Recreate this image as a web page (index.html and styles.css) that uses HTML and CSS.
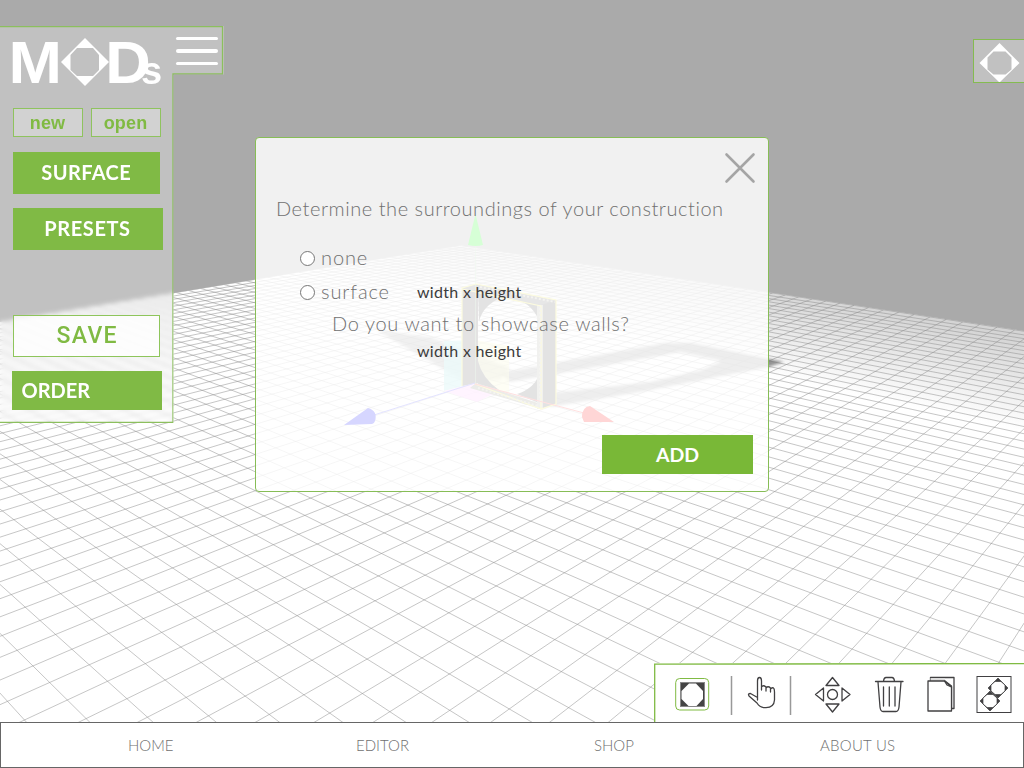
FILE: index.html
```html
<!DOCTYPE html>
<html lang="en">
<head>
<meta charset="utf-8">
<title>MODs editor</title>
<link rel="stylesheet" href="styles.css">
</head>
<body>
<div class="app">
  <main class="stage">
    <svg class="scene" viewBox="0 0 1024 722" width="1024" height="722">
      <defs>
        <linearGradient id="fog" gradientUnits="userSpaceOnUse" x1="900" y1="312" x2="881" y2="400">
          <stop offset="0" stop-color="#d4d4d4"/><stop offset="1" stop-color="#fff"/>
        </linearGradient>
        <filter id="soft"><feGaussianBlur stdDeviation="1.5"/></filter>
        <clipPath id="floor-clip"><path d="M0 322 461 245.500 1024 331V722H0z"/></clipPath>
      </defs>
      <path d="M0 322 461 245.500 1024 331V722H0z" fill="url(#fog)"/>
      <g clip-path="url(#floor-clip)"><path id="grid" class="grid"/></g>
      <g filter="url(#soft)" fill="#666">
        <path fill-rule="evenodd" d="M500 373 665 343 692 343 784 362 768 367 640 392 550 407 552 393 650 382 702 370 722 361 680 352 510 382z" opacity=".7"/>
        <path d="M376 330 430 337 465 350 510 368 500 380 462 380z" opacity=".6"/>
      </g>
      <path d="M444 341 475 340V383L444 391z" fill="#8dd" opacity=".8"/>
      <path d="M476 340 509 346V393L476 383z" fill="#ee9" opacity=".6"/>
      <path d="M444 391 475 383 499 391 477 402z" fill="#faf" opacity=".8"/>
      <path d="M462 288 478 284V383L462 386z" fill="#575555"/>
      <path d="M476 284 556 300 541 306 462 289z" fill="#6b6968"/>
      <path d="M478 290 502 297Q482 306 479 322zM521 301 540 305V326Q537 309 521 301zM478 361Q482 378 499 390L478 384zM517 394Q535 388 539 374V403z" fill="#555"/>
      <path d="M476 383 541 404V409L470 388z" fill="#887"/>
      <path d="M541 305 556 300V404L541 409z" fill="#555252"/>
      <path d="M537 305H543V409H537z" fill="#aaa79e"/>
      <path d="M462 386V288L476 284 556 300V404L541 409 475 384M541 409V306L462 289" fill="none" stroke="#eee840" stroke-width="1.200"/>
      <path d="M480 287 555 302M478 388 538 406M540 308V404" fill="none" stroke="#bba" stroke-width="2" stroke-dasharray="2 2"/>
      <path d="M475.500 245V383" stroke="#9d9" stroke-width=".5"/>
      <path d="M475 383 374 415" stroke="#55f"/>
      <path d="M475 384 584 413" stroke="#f44"/>
      <path d="M475.500 214 483 245Q476 247 468 245z" fill="#0f0"/>
      <path d="M344 425 368 408Q378 411 375 421 374 424 372 424z" fill="#00f"/>
      <path d="M614 422 590 406Q582 407 582 417L584 422z" fill="red"/>
    </svg>

    <aside class="sidebar">
      <svg class="outline" viewBox="0 0 224 398" width="224" height="398"><path d="M0 .500H222.500V48H173V396.500H0"/></svg>
      <header class="brand">
        <svg class="logo" viewBox="0 0 161 50" width="161" height="50">
          <text x="8.500" y="47" class="logo-big" textLength="53.500" lengthAdjust="spacingAndGlyphs">M</text>
          <path fill-rule="evenodd" d="M85 2 109 26 85 50 61 26zM77 12 70.500 19V34L77 40H93L99 34V19L93 12z"/>
          <text x="105.300" y="47" class="logo-big" textLength="45.500" lengthAdjust="spacingAndGlyphs">D</text>
          <text x="141" y="47.500" class="logo-small">s</text>
        </svg>
        <button class="menu" aria-label="Menu"><span></span><span></span><span></span></button>
      </header>
      <div class="pair"><button class="ghost">new</button><button class="ghost ghost-open">open</button></div>
      <button class="solid surface">SURFACE</button>
      <button class="solid presets">PRESETS</button>
      <button class="save">SAVE</button>
      <button class="solid order">ORDER</button>
    </aside>

    <div class="part-tab">
      <svg viewBox="0 0 42 42" width="42" height="42"><path fill-rule="evenodd" fill="#fff" d="M25.500 3 45.500 23 25.500 42.500 5.500 23zM19.500 11.500 13.500 17.500V29.500L19.500 34.500H31.500L37.500 29.500V17.500L31.500 11.500z"/></svg>
    </div>

    <section class="dialog">
      <button class="close" aria-label="Close"><svg viewBox="0 0 32 32" width="32" height="32"><path d="M2.500 2.500 29.500 29.500M29.500 2.500 2.500 29.500"/></svg></button>
      <h1 class="question">Determine the surroundings of your construction</h1>
      <label class="option none"><span class="radio"></span><span class="t-none">none</span></label>
      <div class="option"><span class="radio"></span><span class="t-surface">surface</span><span class="size">width x height</span></div>
      <p class="walls">Do you want to showcase walls?</p>
      <p class="size size-walls">width x height</p>
      <button class="add">ADD</button>
    </section>

    <div class="tools">
      <svg viewBox="-1 0 370 60" width="370" height="60">
        <path d="M-.300 60V1.200L370 .500" fill="none" stroke="#80bb43" stroke-width="1.300"/>
        <rect x="20.700" y="15.500" width="33" height="31.500" rx="4" fill="none" stroke="#80bb43"/>
        <rect x="25.500" y="19.500" width="24" height="24" fill="#444" stroke="#888"/>
        <path d="M34 20.500H41L48 28V36L41.500 43H33.500L26.500 36V28z" fill="#fff"/>
        <path d="M76.500 13V52M135.500 13V52" stroke="#999" stroke-width="1.500"/>
        <g fill="none" stroke="#414042" stroke-width="1.300" stroke-linejoin="round" stroke-linecap="round">
          <path d="M102.500 37V18Q102.500 14.500 104.500 14.500T106.500 18V27M106.500 24Q108 21.500 111 24V28M111 25Q113 22.500 115.500 25V29M115.500 26Q119.500 22.500 119.500 29V37Q119 44.500 111 44.700 105 45 102 40L94 33Q92.500 30.500 95.500 30.500L102.500 34.500"/>
          <circle cx="177.500" cy="31.500" r="5"/>
          <path d="M177.500 14.500 184 22.500H171zM177.500 49 184 41H171zM160.500 31.500 168.500 25V38zM195 31.500 187 25V38z"/>
          <path d="M220.500 18.500H248M223 19 225 44Q225.500 48.500 228 48.500H241Q243.500 48.500 244 44L246 19M228.500 18Q229 14.500 231 14.500H237Q239 14.500 239.500 18"/>
          <path d="M228.500 24V43M234.300 24V43M240 24V43"/>
          <path d="M275.500 18V14.500H299V45.500H296.500V23L290 18z" fill="#fff"/><path d="M275.500 15H290V18H275.500z" fill="#ddd" stroke="none"/>
          <path d="M273 18H289.500L296.500 24V48H273z" fill="#fff"/><path d="M289.500 18 292 22 296.500 24"/>
        </g>
        <rect x="322" y="13.500" width="34" height="36" fill="#fff" stroke="#414042"/>
        <g stroke="#414042" stroke-width=".7" fill="#414042" fill-rule="evenodd">
          <path d="M343 15 353 25 343 35 333 25zM340 18.500 336 22V28L340 31.500H346L350 28V22L346 18.500z"/>
          <path d="M335 28 345 38 335 48 325 38zM332 31.500 328 35V41L332 44.500H338L342 41V35L338 31.500z"/>
        </g>
      </svg>
    </div>
  </main>
  <nav class="nav"><a class="n-home">HOME</a><a class="n-editor">EDITOR</a><a class="n-shop">SHOP</a><a class="n-about">ABOUT US</a></nav>
</div>
<script src="scene.js"></script>
</body>
</html>
```
FILE: styles.css
```css
* { box-sizing: border-box; }
body { margin: 0; font-family: Lato, "Open Sans", sans-serif; }
button { margin: 0; padding: 0; border: 0; background: none; font: inherit; white-space: nowrap; }
h1, p { margin: 0; font-weight: 300; white-space: nowrap; }
svg { display: block; }
.app { width: 1024px; height: 768px; display: flex; flex-direction: column; overflow: hidden; }
.stage { position: relative; height: 722px; background: #aaa; overflow: hidden; }
.grid { fill: none; stroke: #8c8c8c; stroke-width: .5; }

.sidebar { position: absolute; left: 0; top: 26px; width: 224px; height: 398px; display: flex; flex-direction: column; align-items: flex-start; background: rgba(255,255,255,.28); backdrop-filter: blur(2px); clip-path: polygon(0 0, 224px 0, 224px 48.500px, 173.500px 48.500px, 173.500px 397px, 0 397px); }
.outline { position: absolute; inset: 0; }
.outline path { fill: none; stroke: #8cbf5d; stroke-width: 1.3; }
.brand { display: flex; gap: 15px; padding-top: 10px; height: 82px; }
.logo { fill: #fff; overflow: visible; }
.logo-big { font: bold 60px "Liberation Sans", sans-serif; }
.logo-small { font: bold 38px "Liberation Sans", sans-serif; }
.menu { display: flex; flex-direction: column; gap: 9px; width: 42px; height: 32px; padding-top: 1px; }
.menu span { width: 42px; height: 3.400px; border-radius: 2px; background: #fff; flex: none; }
.pair { display: flex; gap: 8px; margin-left: 12.500px; }
.ghost { width: 70px; height: 29px; border: 1.500px solid #8fc35e; background: rgba(255,255,255,.28); color: #80ba43; font: bold 18px/24px "Liberation Sans", sans-serif; letter-spacing: .15px; }
.solid { background: #80ba45; color: #fff; font-weight: 700; font-size: 20px; padding-bottom: 2px; }
.surface { margin: 15px 0 0 12.500px; width: 147.500px; height: 42px; letter-spacing: .4px; }
.presets { margin: 14px 0 0 12.500px; width: 150px; height: 42px; letter-spacing: .6px; }
.save { margin: 65px 0 0 12.500px; width: 147.500px; height: 42px; border: 1px solid #8ec55b; background: rgba(255,255,255,.8); color: #80ba43; font: 500 23px/40px Roboto, sans-serif; letter-spacing: 1.300px; padding-left: 2px; }
.order { margin: 14px 0 0 11.500px; width: 150.500px; height: 39px; padding-left: 10px; padding-bottom: 1px; text-align: left; }

.part-tab { position: absolute; right: 0; top: 39px; width: 51px; height: 44px; border: 1.500px solid #84bb50; border-right: 0; background: rgba(255,255,255,.28); overflow: hidden; }
.part-tab svg { overflow: visible; }

.dialog { position: absolute; left: 255px; top: 137px; width: 514px; height: 355px; display: flex; flex-direction: column; align-items: flex-start; padding: 14px 15px 0 20px; border: 1.500px solid #87bd56; border-radius: 4px; background: rgba(255,255,255,.84); color: #707070; font-size: 20px; font-weight: 300; }
.close { align-self: flex-end; margin-right: -3px; height: 32px; }
.close path { stroke: #a5a5a5; stroke-width: 2.6; stroke-linecap: round; }
.question { margin-top: 10px; font-size: 20px; line-height: 28px; letter-spacing: .55px; }
.option { display: flex; align-items: center; height: 34px; margin-left: 24px; gap: 6px; }
.none { margin-top: 18px; }
.radio { width: 15px; height: 15px; border: 1px solid #777; border-radius: 50%; background: #fff; margin-top: 2px; }
.t-none, .t-surface { letter-spacing: .9px; }
.t-surface { width: 74px; }
.size { color: #3c3c3c; font-size: 16px; font-weight: 400; letter-spacing: .3px; }
.option .size { margin-left: 16px; }
.walls { margin-left: 56px; line-height: 30px; letter-spacing: .62px; }
.size-walls { margin-left: 141px; line-height: 25px; }
.add { align-self: flex-end; margin-top: 72px; width: 151px; height: 39px; padding-bottom: 1px; background: #79b837; color: #fff; font-size: 19.500px; font-weight: 700; }

.tools { position: absolute; right: 0; bottom: -1px; width: 370px; height: 60px; background: #fff; }
.nav { height: 46px; display: flex; border: 1px solid #666; background: #fff; color: #707070; font-size: 15px; font-weight: 300; line-height: 45px; padding-left: 127px; white-space: nowrap; }
.n-home { width: 228px; }
.n-editor { width: 238px; }
.n-shop { width: 226px; }
.n-about { letter-spacing: .25px; }
```
FILE: scene.js
```js
// Perspective floor: origin plus the two vanishing points of the grid axes.
const origin = [67.33, 700], vanishA = [-547, 92], vanishB = [1362, 96];
const stepA = -0.02967, stepB = 0.03204, backA = -41, backB = 56, near = 0.12;

function project(i, j) {
  const u = i * stepA, v = j * stepB, w = 1 + u + v;
  return [0, 1].map(k => ((origin[k] + u * vanishA[k] + v * vanishB[k]) / w).toFixed(2)).join(' ');
}

let d = '';
for (let j = backB; j > -65; j--) {
  const end = (near - 1 - j * stepB) / stepA;
  if (end > backA) d += 'M' + project(backA, j) + 'L' + project(end, j);
}
for (let i = backA; i < 90; i++) {
  const end = (near - 1 - i * stepA) / stepB;
  if (end < backB) d += 'M' + project(i, backB) + 'L' + project(i, end);
}
document.getElementById('grid').setAttribute('d', d);
```
